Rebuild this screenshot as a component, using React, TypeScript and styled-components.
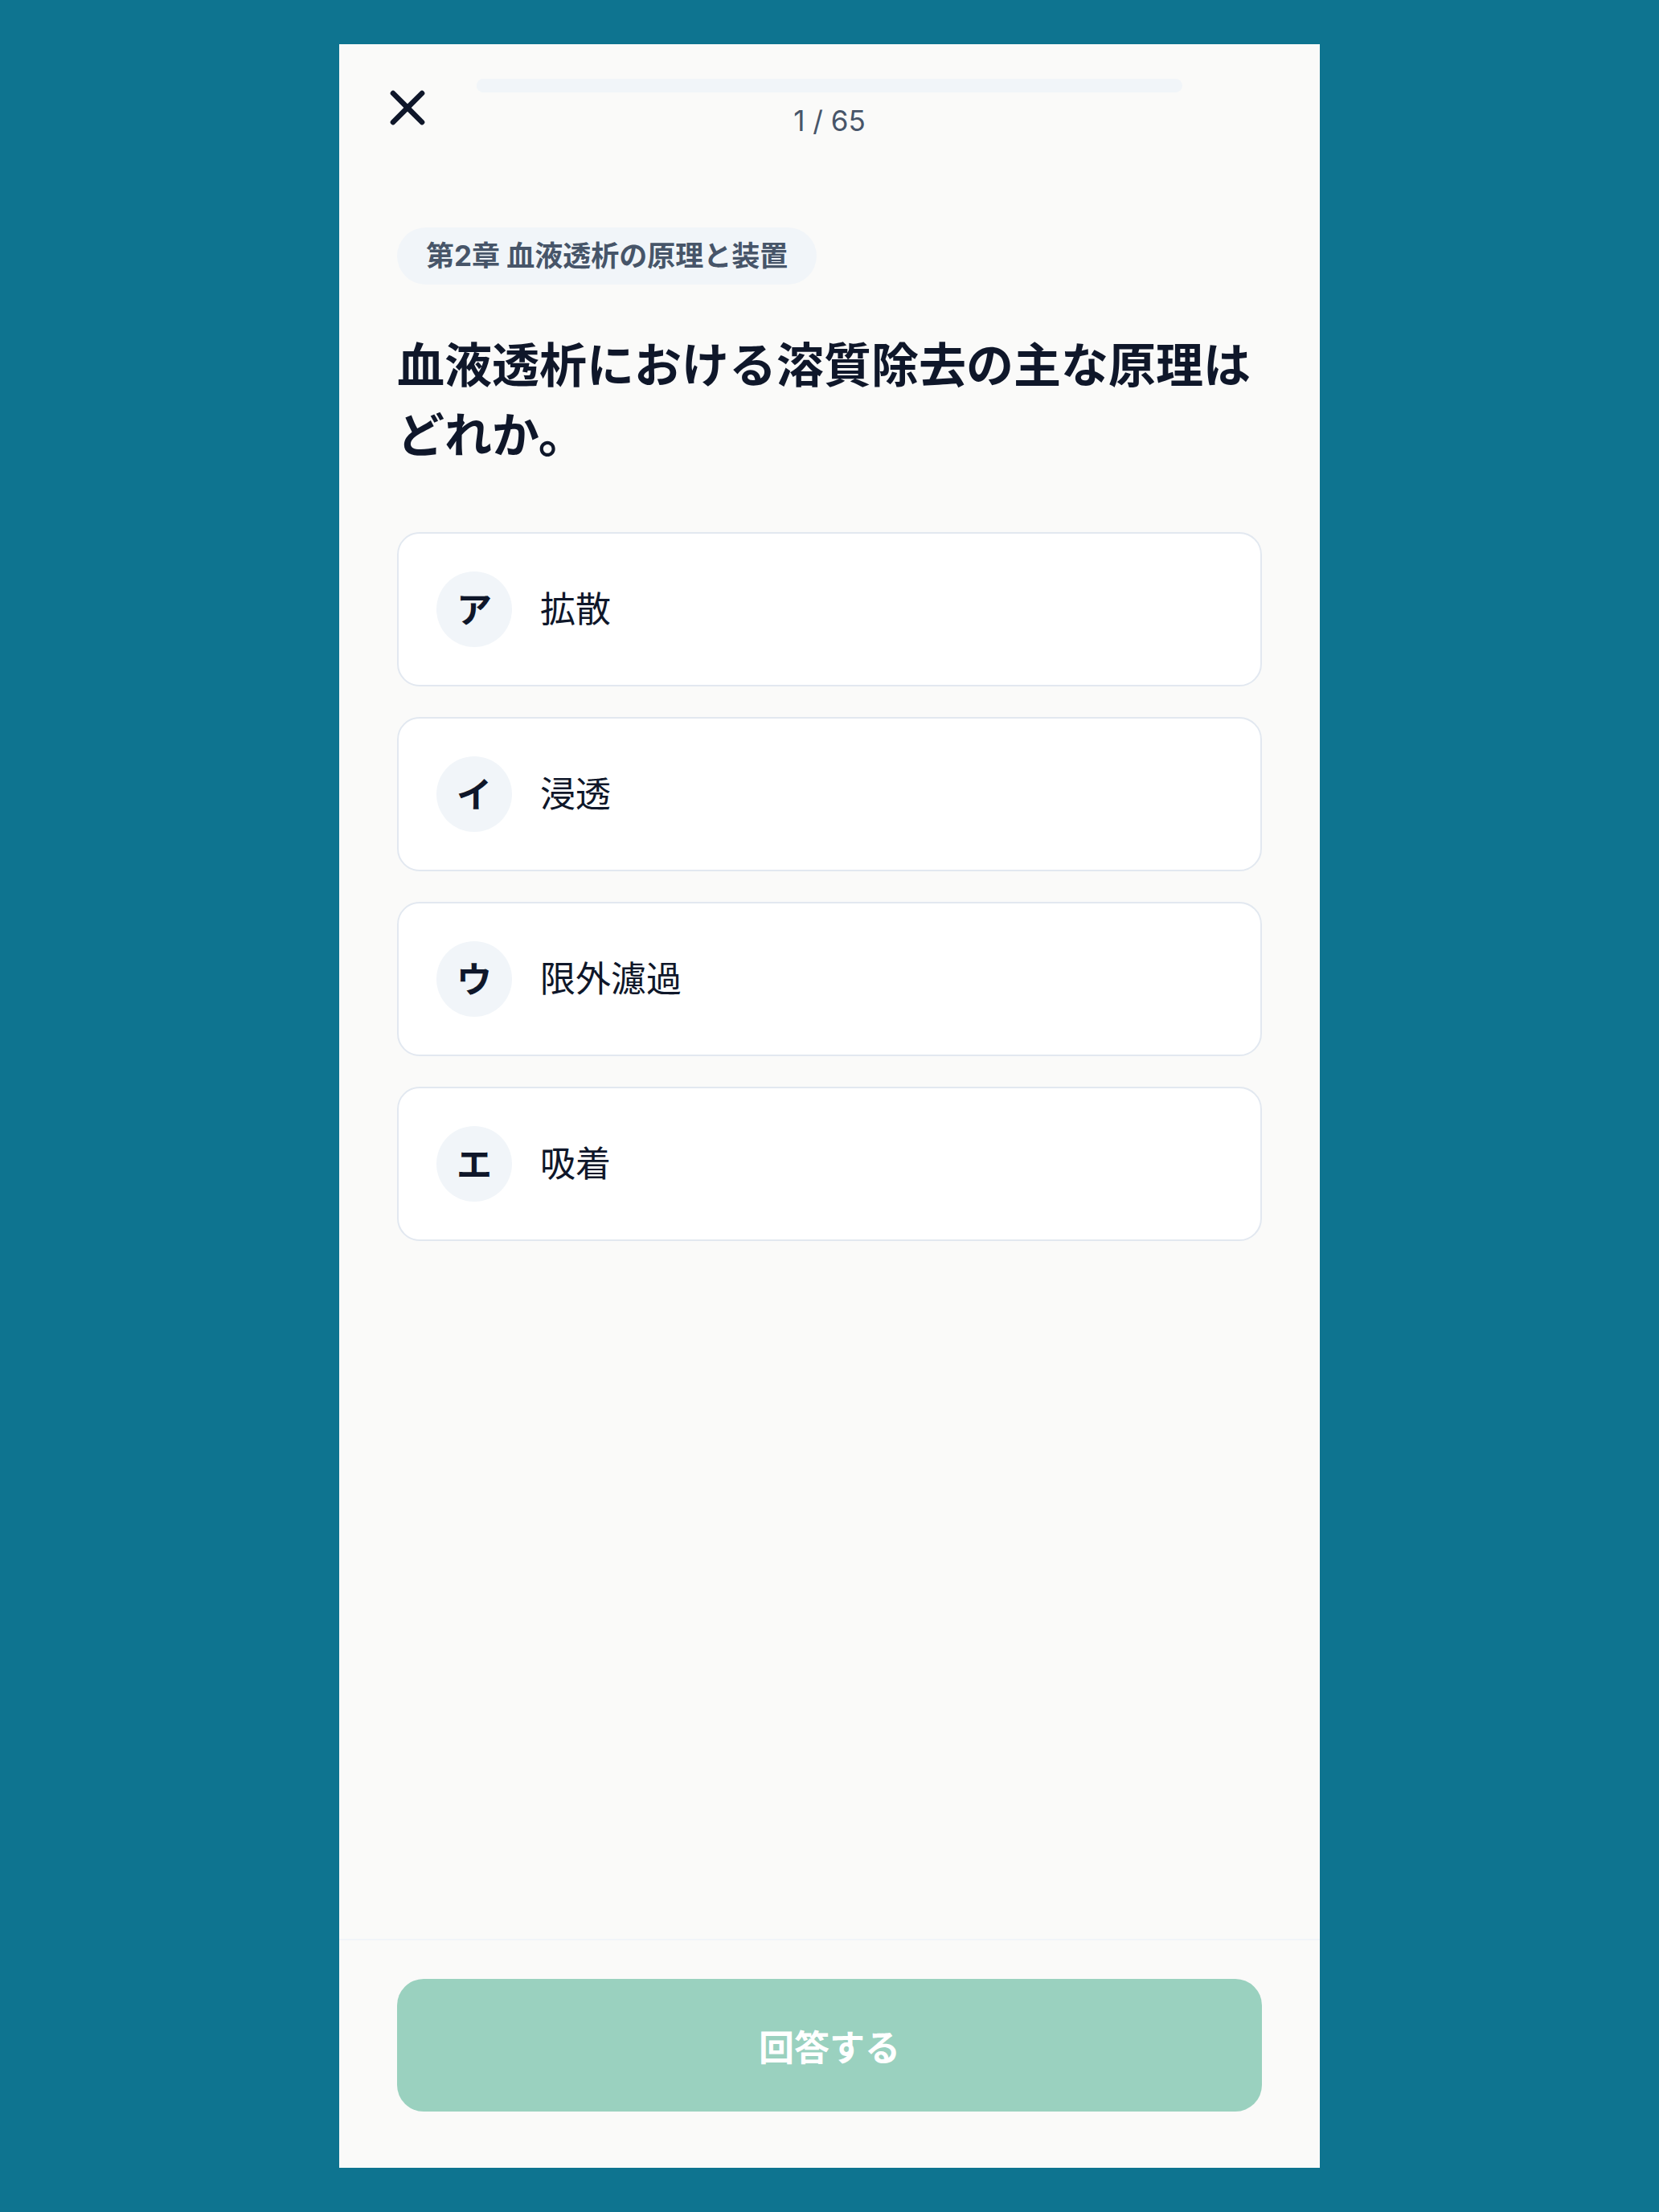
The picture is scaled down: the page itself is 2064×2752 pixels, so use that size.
import React, { useState } from 'react';
import styled, { createGlobalStyle } from 'styled-components';
import { X } from 'lucide-react';

const GlobalStyle = createGlobalStyle`
  * {
    box-sizing: border-box;
  }

  body {
    margin: 0;
    background-color: #0e7490;
    font-family: Inter, 'Noto Sans CJK JP', sans-serif;
    -webkit-font-smoothing: antialiased;
  }
`;

const Page = styled.div`
  display: flex;
  justify-content: center;
  min-height: 100vh;
  padding: 55px 0;
`;

const Panel = styled.main`
  display: flex;
  flex-direction: column;
  width: 1220px;
  height: 2642px;
  background-color: #fafaf9;
`;

const Header = styled.header`
  display: grid;
  grid-template-columns: 123px 1fr 123px;
  align-items: center;
  padding: 42px 48px 0;
`;

const CloseButton = styled.button`
  display: flex;
  justify-content: center;
  align-items: center;
  width: 74px;
  height: 74px;
  padding: 0;
  border: none;
  background: none;
  color: #0f172a;
  cursor: pointer;
`;

const Progress = styled.div`
  display: flex;
  flex-direction: column;
  align-items: center;
  gap: 14px;
`;

const Track = styled.div`
  width: 100%;
  height: 17px;
  border-radius: 9px;
  background-color: #f1f5f9;
  overflow: hidden;
`;

const Fill = styled.div`
  height: 100%;
  background-color: #f1f5f9;
`;

const Count = styled.span`
  font-size: 35px;
  line-height: 1.2;
  color: #475569;
`;

const Content = styled.section`
  flex: 1;
  display: flex;
  flex-direction: column;
  align-items: flex-start;
  padding: 112px 72px 0;
`;

const Chapter = styled.span`
  display: inline-flex;
  align-items: center;
  height: 71px;
  padding: 0 36px 6px;
  border-radius: 999px;
  background-color: #f1f5f9;
  font-size: 35px;
  font-weight: 700;
  color: #475569;
`;

const Question = styled.h1`
  margin: 57px 0 0;
  font-size: 59px;
  font-weight: 700;
  line-height: 87px;
  color: #0f172a;
`;

const Options = styled.ul`
  display: flex;
  flex-direction: column;
  gap: 38px;
  width: 100%;
  margin: 77px 0 0;
  padding: 0;
  list-style: none;
`;

const OptionCard = styled.li<{ $selected: boolean }>`
  display: flex;
  align-items: center;
  gap: 35px;
  height: 192px;
  padding: 0 47px;
  border: 2px solid ${({ $selected }) => ($selected ? '#34a383' : '#e2e8f0')};
  border-radius: 28px;
  background-color: #ffffff;
  cursor: pointer;
`;

const Badge = styled.span`
  display: flex;
  justify-content: center;
  align-items: center;
  flex-shrink: 0;
  width: 94px;
  height: 94px;
  padding-bottom: 4px;
  border-radius: 50%;
  background-color: #f1f5f9;
  font-size: 44px;
  font-weight: 700;
  color: #0f172a;
`;

const OptionLabel = styled.span`
  padding-bottom: 6px;
  font-size: 44px;
  color: #0f172a;
`;

const Footer = styled.footer`
  padding: 48px 72px 70px;
  border-top: 2px solid #f1f5f9;
`;

const SubmitButton = styled.button`
  width: 100%;
  height: 165px;
  border: none;
  border-radius: 33px;
  background-color: #9ad1bf;
  font-family: inherit;
  font-size: 44px;
  font-weight: 700;
  color: #ffffff;
`;

const options = [
  { key: 'ア', label: '拡散' },
  { key: 'イ', label: '浸透' },
  { key: 'ウ', label: '限外濾過' },
  { key: 'エ', label: '吸着' },
];

const current = 1;
const total = 65;

const App: React.FC = () => {
  const [selected, setSelected] = useState<string | null>(null);

  return (
    <>
      <GlobalStyle />
      <Page>
        <Panel>
          <Header>
            <CloseButton aria-label="閉じる">
              <X size={72} strokeWidth={2.2} />
            </CloseButton>
            <Progress>
              <Track>
                <Fill style={{ width: `${(current / total) * 100}%` }} />
              </Track>
              <Count>
                {current} / {total}
              </Count>
            </Progress>
          </Header>

          <Content>
            <Chapter>第2章 血液透析の原理と装置</Chapter>
            <Question>血液透析における溶質除去の主な原理はどれか。</Question>
            <Options>
              {options.map((option) => (
                <OptionCard
                  key={option.key}
                  $selected={selected === option.key}
                  onClick={() => setSelected(option.key)}
                >
                  <Badge>{option.key}</Badge>
                  <OptionLabel>{option.label}</OptionLabel>
                </OptionCard>
              ))}
            </Options>
          </Content>

          <Footer>
            <SubmitButton disabled={!selected}>回答する</SubmitButton>
          </Footer>
        </Panel>
      </Page>
    </>
  );
};

export default App;
